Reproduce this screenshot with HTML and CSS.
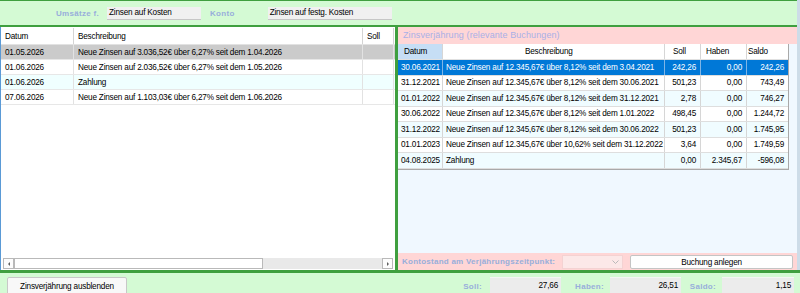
FILE: index.html
```html
<!DOCTYPE html>
<html>
<head>
  <meta charset="utf-8">
  <title>Zinsverjährung</title>
  <link rel="stylesheet" href="styles.css">
</head>
<body>
<div class="window">
  <div class="upper">
    <div class="topbar">
      <span class="caption">Umsätze f.</span>
      <span class="field field-art">Zinsen auf Kosten</span>
      <span class="caption caption-konto">Konto</span>
      <span class="field field-konto">Zinsen auf festg. Kosten</span>
    </div>

    <div class="main">
      <!-- Buchungen -->
      <div class="left-pane">
        <div class="grid-left">
          <div class="row head">
            <div class="c">Datum</div><div class="c">Beschreibung</div><div class="c">Soll</div>
          </div>
          <div class="row sel-inactive">
            <div class="c">01.05.2026</div><div class="c">Neue Zinsen auf 3.036,52€ über 6,27% seit dem 1.04.2026</div><div class="c"></div>
          </div>
          <div class="row">
            <div class="c">01.06.2026</div><div class="c">Neue Zinsen auf 2.036,52€ über 6,27% seit dem 1.05.2026</div><div class="c"></div>
          </div>
          <div class="row alt">
            <div class="c">01.06.2026</div><div class="c">Zahlung</div><div class="c"></div>
          </div>
          <div class="row">
            <div class="c">07.06.2026</div><div class="c">Neue Zinsen auf 1.103,03€ über 6,27% seit dem 1.06.2026</div><div class="c"></div>
          </div>
        </div>
        <div class="hscroll">
          <div class="sb-btn"><span class="arrow arrow-left"></span></div>
          <div class="sb-thumb"></div>
          <div class="sb-track"></div>
          <div class="sb-btn"><span class="arrow arrow-right"></span></div>
        </div>
      </div>

      <!-- Zinsverjährung -->
      <div class="right-pane">
        <div class="pane-title">Zinsverjährung (relevante Buchungen)</div>
        <div class="grid-right">
          <div class="row head">
            <div class="c h-datum">Datum</div>
            <div class="c h-beschr">Beschreibung</div>
            <div class="c h-soll">Soll</div>
            <div class="c h-haben">Haben</div>
            <div class="c h-saldo">Saldo</div>
          </div>
          <div class="row selected">
            <div class="c">30.06.2021</div>
            <div class="c">Neue Zinsen auf 12.345,67€ über 8,12% seit dem 3.04.2021</div>
            <div class="c num">242,26</div><div class="c num">0,00</div><div class="c num">242,26</div>
          </div>
          <div class="row">
            <div class="c">31.12.2021</div>
            <div class="c">Neue Zinsen auf 12.345,67€ über 8,12% seit dem 30.06.2021</div>
            <div class="c num">501,23</div><div class="c num">0,00</div><div class="c num">743,49</div>
          </div>
          <div class="row alt">
            <div class="c">01.01.2022</div>
            <div class="c">Neue Zinsen auf 12.345,67€ über 8,12% seit dem 31.12.2021</div>
            <div class="c num">2,78</div><div class="c num">0,00</div><div class="c num">746,27</div>
          </div>
          <div class="row">
            <div class="c">30.06.2022</div>
            <div class="c">Neue Zinsen auf 12.345,67€ über 8,12% seit dem 1.01.2022</div>
            <div class="c num">498,45</div><div class="c num">0,00</div><div class="c num">1.244,72</div>
          </div>
          <div class="row alt">
            <div class="c">31.12.2022</div>
            <div class="c">Neue Zinsen auf 12.345,67€ über 8,12% seit dem 30.06.2022</div>
            <div class="c num">501,23</div><div class="c num">0,00</div><div class="c num">1.745,95</div>
          </div>
          <div class="row">
            <div class="c">01.01.2023</div>
            <div class="c">Neue Zinsen auf 12.345,67€ über 10,62% seit dem 31.12.2022</div>
            <div class="c num">3,64</div><div class="c num">0,00</div><div class="c num">1.749,59</div>
          </div>
          <div class="row alt">
            <div class="c">04.08.2025</div>
            <div class="c">Zahlung</div>
            <div class="c num">0,00</div><div class="c num">2.345,67</div><div class="c num">-596,08</div>
          </div>
        </div>
        <div class="pane-fill"></div>
        <div class="pane-footer">
          <span class="caption footer-caption">Kontostand am Verjährungszeitpunkt:</span>
          <div class="combo">
            <svg width="7" height="4" viewBox="0 0 7 4"><polyline points="0.5,0.5 3.5,3.5 6.5,0.5" fill="none" stroke="#b9b9b9" stroke-width="1"/></svg>
          </div>
          <div class="btn btn-buchung">Buchung anlegen</div>
        </div>
      </div>
    </div>
  </div>

  <div class="bottombar">
    <div class="btn btn-hide">Zinsverjährung ausblenden</div>
    <div class="totals">
      <span class="caption total-label total-soll">Soll:</span>
      <span class="total-box">27,66</span>
      <span class="caption total-label total-haben">Haben:</span>
      <span class="total-box">26,51</span>
      <span class="caption total-label total-saldo">Saldo:</span>
      <span class="total-box total-box-wide">1,15</span>
    </div>
  </div>
</div>
</body>
</html>
```

FILE: styles.css
```css
* {
  box-sizing: border-box;
}
html, body {
  margin: 0;
}
body {
  width: 800px;
  height: 293px;
  overflow: hidden;
  font-family: "Liberation Sans", Arial, sans-serif;
  font-size: 8.2px;
  letter-spacing: -.2px;
  color: #000;
  background: #d4fad4;
}
.window {
  display: flex;
  flex-direction: column;
  height: 293px;
}
.upper {
  display: flex;
  flex-direction: column;
  border-right: 3px solid #cddce8;
}

/* top filter bar */
.topbar {
  height: 27px;
  display: flex;
  align-items: flex-start;
  background: #d4fad4;
  border-top: 1px solid #3f9f3f;
  border-bottom: 2px solid #3f9f3f;
  padding-left: 56px;
}
.caption {
  font-weight: bold;
  font-size: 8px;
  letter-spacing: .3px;
  color: #98aedb;
  white-space: nowrap;
}
.topbar .caption {
  margin-top: 6px;
  line-height: 14px;
}
.field {
  height: 13px;
  margin-top: 6px;
  background: #f0f0f0;
  border-bottom: 1px solid #c6c6c6;
  padding-left: 2px;
  line-height: 12px;
  white-space: nowrap;
}
.field-art {
  width: 94px;
  margin-left: 8px;
}
.caption-konto {
  margin-left: 9px;
}
.field-konto {
  width: 124px;
  margin-left: 33px;
}

/* split area */
.main {
  height: 243px;
  display: flex;
  border-left: 1px solid #5a9ad6;
}
.left-pane {
  width: 394px;
  flex: none;
  background: #fff;
  display: flex;
  flex-direction: column;
  padding-top: 1px;
}
.right-pane {
  flex: 1;
  border-left: 3px solid #3f9f3f;
  display: flex;
  flex-direction: column;
  background: #f0f8ff;
}

.row {
  display: grid;
  white-space: nowrap;
}
.c {
  display: flex;
  align-items: center;
  overflow: hidden;
  padding-left: 4px;
}

/* left grid */
.grid-left .row {
  grid-template-columns: 73px 289px 31px;
  height: 15px;
  border-bottom: 1px solid #e7e7e7;
}
.grid-left .row.head {
  height: 17px;
  border-bottom: 1px solid #e2e2e2;
  background: #fff;
}
.grid-left .c {
  border-right: 1px solid #e2e2e2;
}
.grid-left .head .c {
  border-right: 1px solid #d4d4d4;
}
.sel-inactive {
  background: #cbcbcb;
}
.alt {
  background: #f0ffff;
}

.hscroll {
  margin: auto 2px 1px 2px;
  height: 11px;
  display: flex;
}
.sb-btn {
  width: 11px;
  border: 1px solid #b9b9b9;
  background: #fdfdfd;
  display: flex;
  align-items: center;
  justify-content: center;
}
.arrow {
  width: 0;
  height: 0;
  border-top: 2px solid transparent;
  border-bottom: 2px solid transparent;
}
.arrow-left {
  border-right: 2px solid #606060;
}
.arrow-right {
  border-left: 2px solid #606060;
}
.sb-thumb {
  width: 249px;
  border: 1px solid #b9b9b9;
  background: #fff;
}
.sb-track {
  flex: 1;
  background: #e9e9e9;
}

/* right grid */
.pane-title {
  height: 17px;
  background: #ffd6d6;
  color: #a9b0e6;
  font-size: 9px;
  letter-spacing: .1px;
  line-height: 17px;
  padding-left: 5px;
  white-space: nowrap;
}
.grid-right {
  width: 391px;
  border-right: 1px solid #a9a9a9;
  border-bottom: 1px solid #a9a9a9;
}
.grid-right .row {
  grid-template-columns: 45px 222px 36px 46px 41px;
  height: 15.5px;
  background: #fff;
  border-bottom: 1px solid #dedede;
}
.grid-right .row.alt {
  background: #f0fcff;
}
.grid-right .row.head {
  height: 16px;
  background: #fff;
  border-bottom: 1px solid #e0e0e0;
}
.grid-right .c {
  padding-left: 3px;
  border-right: 1px solid #d6d6d6;
}
.grid-right .c:last-child {
  border-right: none;
}
.grid-right .c.num {
  justify-content: flex-end;
  padding-left: 0;
  padding-right: 4px;
}
.grid-right .row.selected {
  background: #0078d7;
  color: #fff;
}
.grid-right .selected .c {
  border-right-color: #7fb5e6;
}
.h-datum {
  background: #c6def5;
}
.grid-right .head .h-datum {
  padding-left: 6px;
}
.grid-right .head .h-beschr {
  padding-left: 82px;
}
.grid-right .head .h-soll {
  padding-left: 8px;
}
.grid-right .head .h-haben {
  padding-left: 5px;
}
.grid-right .head .h-saldo {
  padding-left: 1px;
}
.pane-fill {
  flex: 1;
}
.pane-footer {
  height: 17px;
  background: #ffd6d6;
  display: flex;
  align-items: flex-start;
  padding: 2px 0 0 4px;
}
.footer-caption {
  width: 160px;
  line-height: 14px;
  letter-spacing: .25px;
}
.combo {
  width: 61px;
  height: 14px;
  background: #fce8e8;
  border: 1px solid #f4d2d2;
  display: flex;
  align-items: center;
  justify-content: flex-end;
  padding-right: 3px;
}
.btn {
  height: 14px;
  background: #fefefe;
  border: 1px solid #c4c4c4;
  border-radius: 2px;
  display: flex;
  align-items: center;
  justify-content: center;
  white-space: nowrap;
}
.btn-buchung {
  width: 163px;
  margin-left: 7px;
}

/* bottom bar */
.bottombar {
  height: 23px;
  border-top: 3px solid #3f9f3f;
  background: #d4fad4;
  display: flex;
  align-items: flex-start;
  padding-top: 4px;
}
.btn-hide {
  width: 120px;
  height: 18px;
  margin-left: 7px;
  background: #f8f8f8;
  border-color: #c8c8c8;
}
.totals {
  margin-left: auto;
  margin-right: 6px;
  display: flex;
  align-items: flex-start;
}
.total-label {
  text-align: right;
  padding-right: 6px;
  line-height: 19px;
}
.total-soll {
  width: 63px;
  padding-right: 8px;
}
.total-haben {
  width: 49px;
}
.total-saldo {
  width: 41px;
}
.total-box {
  width: 71px;
  height: 18px;
  background: #ececec;
  border-top: 1px solid #f6f6f6;
  border-bottom: 1px solid #8a8a8a;
  text-align: right;
  padding-right: 3px;
  line-height: 15px;
}
.total-box-wide {
  width: 72px;
}
```
